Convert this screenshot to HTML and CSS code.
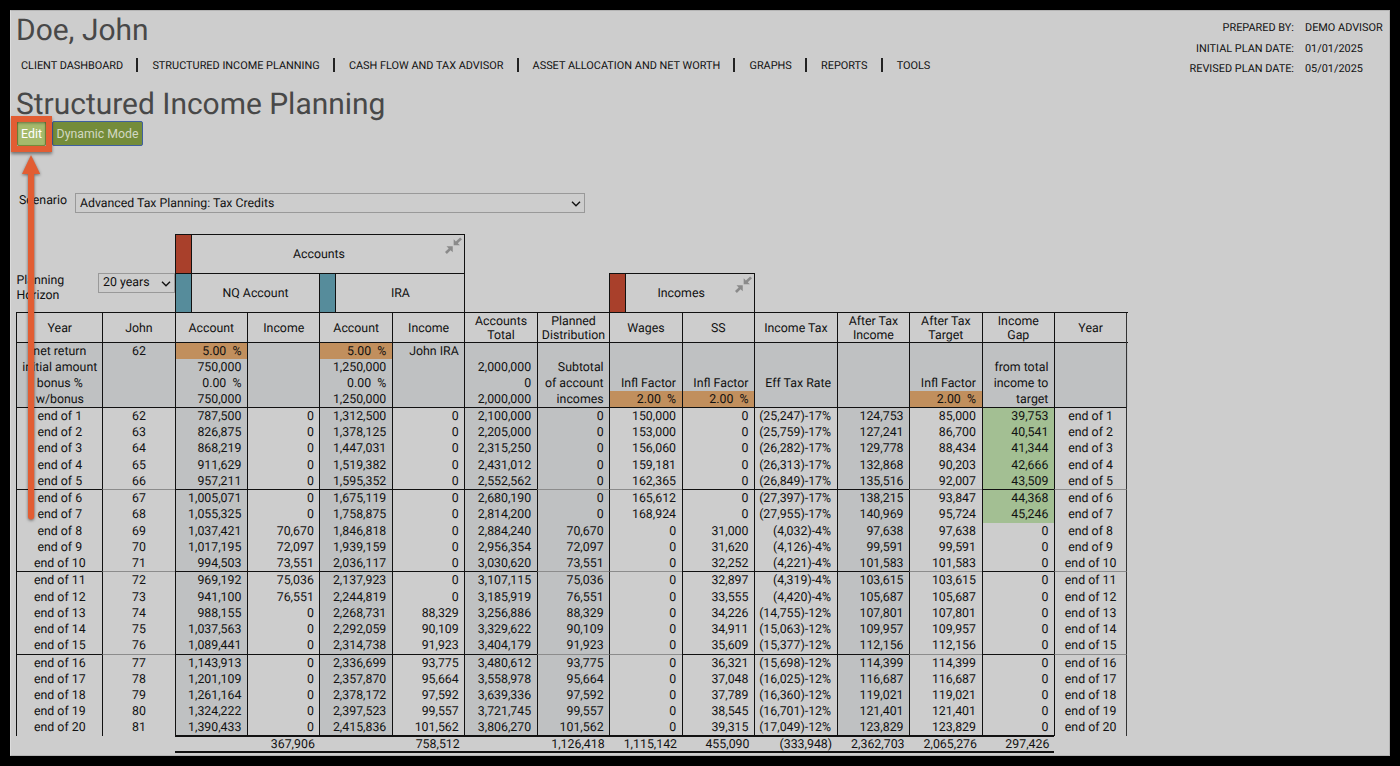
FILE: index.html
```html
<!DOCTYPE html>
<html lang="en">
<head>
  <meta charset="UTF-8">
  <title>Structured Income Planning</title>
  <link rel="stylesheet" href="styles.css">
</head>
<body>

  <div class="page">
    <div class="top">
      <div class="top-left">
        <h1 class="client-name">Doe, John</h1>
        <nav class="main-nav">
          <a>CLIENT DASHBOARD</a>
          <a>STRUCTURED INCOME PLANNING</a>
          <a>CASH FLOW AND TAX ADVISOR</a>
          <a>ASSET ALLOCATION AND NET WORTH</a>
          <a>GRAPHS</a>
          <a>REPORTS</a>
          <a>TOOLS</a>
        </nav>
      </div>
      <div class="plan-info">
        <span>PREPARED BY:</span><span>DEMO ADVISOR</span>
        <span>INITIAL PLAN DATE:</span><span>01/01/2025</span>
        <span>REVISED PLAN DATE:</span><span>05/01/2025</span>
      </div>
    </div>

    <h2 class="page-title">Structured Income Planning</h2>

    <div class="buttons">
      <button class="btn btn-edit">Edit</button>
      <button class="btn btn-dynamic">Dynamic Mode</button>
    </div>

    <div class="scenario">
      <label>Scenario</label>
      <div class="select select-scenario">
        <span>Advanced Tax Planning: Tax Credits</span>
        <svg class="chevron" viewBox="0 0 10 6"><path d="M1 0.8 L5 4.8 L9 0.8"/></svg>
      </div>
    </div>

    <div class="plan">
      <div class="groups">
        <div class="horizon">
          <label>Planning<br>Horizon</label>
          <div class="select select-years">
            <span>20 years</span>
            <svg class="chevron" viewBox="0 0 10 6"><path d="M1 0.8 L5 4.8 L9 0.8"/></svg>
          </div>
        </div>
        <div class="group accounts">
          <i class="tab red"></i><span>Accounts</span>
          <svg class="collapse" viewBox="0 0 18 18"><path d="M9.2 2.4V8.8h6.6l-2.3-2.3L18 2.4 16 0.4 11.5 4.7zM8.2 16.2V9.8H1.6l2.3 2.3L0 16 2 18 5.9 13.9z"/></svg>
        </div>
        <div class="group nq"><i class="tab teal"></i><span>NQ Account</span></div>
        <div class="group ira"><i class="tab teal"></i><span>IRA</span></div>
        <div class="group incomes">
          <i class="tab red"></i><span>Incomes</span>
          <svg class="collapse" viewBox="0 0 18 18"><path d="M9.2 2.4V8.8h6.6l-2.3-2.3L18 2.4 16 0.4 11.5 4.7zM8.2 16.2V9.8H1.6l2.3 2.3L0 16 2 18 5.9 13.9z"/></svg>
        </div>
      </div>

      <div class="row head">
        <div>Year</div>
        <div>John</div>
        <div>Account</div>
        <div>Income</div>
        <div>Account</div>
        <div>Income</div>
        <div>Accounts<br>Total</div>
        <div>Planned<br>Distribution</div>
        <div>Wages</div>
        <div>SS</div>
        <div>Income Tax</div>
        <div>After Tax<br>Income</div>
        <div>After Tax<br>Target</div>
        <div>Income<br>Gap</div>
        <div>Year</div>
      </div>

      <div class="row summary">
        <div><p>net return</p><p>initial amount</p><p>bonus %</p><p>w/bonus</p></div>
        <div><p>62</p></div>
        <div><p class="rate">5.00 &nbsp;%</p><p>750,000</p><p>0.00 &nbsp;%</p><p>750,000</p></div>
        <div></div>
        <div><p class="rate">5.00 &nbsp;%</p><p>1,250,000</p><p>0.00 &nbsp;%</p><p>1,250,000</p></div>
        <div><p>John IRA</p></div>
        <div><p></p><p>2,000,000</p><p>0</p><p>2,000,000</p></div>
        <div><p></p><p>Subtotal</p><p>of account</p><p>incomes</p></div>
        <div><p></p><p></p><p>Infl Factor</p><p class="rate">2.00 &nbsp;%</p></div>
        <div><p></p><p></p><p>Infl Factor</p><p class="rate">2.00 &nbsp;%</p></div>
        <div><p></p><p></p><p>Eff Tax Rate</p></div>
        <div></div>
        <div><p></p><p></p><p>Infl Factor</p><p class="rate">2.00 &nbsp;%</p></div>
        <div><p></p><p>from total</p><p>income to</p><p>target</p></div>
        <div></div>
      </div>

      <div id="years"></div>

      <div class="row totals">
        <div></div><div></div><div></div>
        <div>367,906</div><div></div><div>758,512</div><div></div>
        <div>1,126,418</div><div>1,115,142</div><div>455,090</div><div>(333,948)</div>
        <div>2,362,703</div><div>2,065,276</div><div>297,426</div><div></div>
      </div>
    </div>

    <!-- Edit button callout -->
    <div class="callout-box"></div>
    <svg class="callout-arrow" width="30" height="376" viewBox="0 0 30 376">
      <path d="M15 4 L24.2 23 H18.2 V365.5 Q18.2 368.5 15 368.5 Q12 368.5 12 365.5 V23 H6 Z"/>
    </svg>
  </div>

  <script>
    // account, income, account, income, total, distribution, wages, ss, tax, after tax, target, gap
    const data = [
      "787,500|0|1,312,500|0|2,100,000|0|150,000|0|(25,247)-17%|124,753|85,000|39,753",
      "826,875|0|1,378,125|0|2,205,000|0|153,000|0|(25,759)-17%|127,241|86,700|40,541",
      "868,219|0|1,447,031|0|2,315,250|0|156,060|0|(26,282)-17%|129,778|88,434|41,344",
      "911,629|0|1,519,382|0|2,431,012|0|159,181|0|(26,313)-17%|132,868|90,203|42,666",
      "957,211|0|1,595,352|0|2,552,562|0|162,365|0|(26,849)-17%|135,516|92,007|43,509",
      "1,005,071|0|1,675,119|0|2,680,190|0|165,612|0|(27,397)-17%|138,215|93,847|44,368",
      "1,055,325|0|1,758,875|0|2,814,200|0|168,924|0|(27,955)-17%|140,969|95,724|45,246",
      "1,037,421|70,670|1,846,818|0|2,884,240|70,670|0|31,000|(4,032)-4%|97,638|97,638|0",
      "1,017,195|72,097|1,939,159|0|2,956,354|72,097|0|31,620|(4,126)-4%|99,591|99,591|0",
      "994,503|73,551|2,036,117|0|3,030,620|73,551|0|32,252|(4,221)-4%|101,583|101,583|0",
      "969,192|75,036|2,137,923|0|3,107,115|75,036|0|32,897|(4,319)-4%|103,615|103,615|0",
      "941,100|76,551|2,244,819|0|3,185,919|76,551|0|33,555|(4,420)-4%|105,687|105,687|0",
      "988,155|0|2,268,731|88,329|3,256,886|88,329|0|34,226|(14,755)-12%|107,801|107,801|0",
      "1,037,563|0|2,292,059|90,109|3,329,622|90,109|0|34,911|(15,063)-12%|109,957|109,957|0",
      "1,089,441|0|2,314,738|91,923|3,404,179|91,923|0|35,609|(15,377)-12%|112,156|112,156|0",
      "1,143,913|0|2,336,699|93,775|3,480,612|93,775|0|36,321|(15,698)-12%|114,399|114,399|0",
      "1,201,109|0|2,357,870|95,664|3,558,978|95,664|0|37,048|(16,025)-12%|116,687|116,687|0",
      "1,261,164|0|2,378,172|97,592|3,639,336|97,592|0|37,789|(16,360)-12%|119,021|119,021|0",
      "1,324,222|0|2,397,523|99,557|3,721,745|99,557|0|38,545|(16,701)-12%|121,401|121,401|0",
      "1,390,433|0|2,415,836|101,562|3,806,270|101,562|0|39,315|(17,049)-12%|123,829|123,829|0"
    ];

    document.getElementById("years").innerHTML = data.map((line, i) => {
      const label = "end of " + (i + 1);
      const cells = [label, 62 + i, ...line.split("|"), label];
      const rule = i % 5 === 0 ? (i === 0 ? " first" : " rule") : "";
      return `<div class="row year${rule}">` + cells.map((c, n) =>
        `<div${n === 13 && c !== "0" ? ' class="gap"' : ""}>${c}</div>`).join("") + "</div>";
    }).join("");
  </script>

</body>
</html>
```
FILE: styles.css
```css
* {
box-sizing: border-box;
}

body {
margin: 0;
padding: 10px;
height: 766px;
overflow: hidden;
background-color: #000;
font-family: Roboto, sans-serif;
font-size: 12.35px;
text-rendering: geometricPrecision;
color: #111;
}

.page {
position: relative;
height: 746px;
padding-left: 6px;
background-color: #cdcdcd;
border: 1px solid #b4b4b4;
border-left-color: #dcdcdc;
}

h1, h2, p {
margin: 0;
font-weight: normal;
}

.top {
display: flex;
justify-content: space-between;
height: 74px;
}

.client-name, .page-title {
margin-left: -1px;
padding-top: 1px;
height: 36px;
font-size: 29.95px;
line-height: 37px;
color: #484848;
}

.main-nav {
display: flex;
align-items: center;
margin-top: 10px;
font-size: 10.9px;
line-height: 17px;
}

.main-nav a {
display: flex;
align-items: center;
white-space: nowrap;
}

.main-nav a:first-child {
padding-left: 4px;
}

.main-nav a + a::before {
content: "";
width: 2px;
height: 14px;
margin: 0 14px 2px 13.2px;
background-color: #222;
}

.plan-info {
display: grid;
grid-template-columns: auto 79px;
grid-auto-rows: 20.6px;
column-gap: 11px;
align-content: start;
margin: 6px 5px 0 0;
font-size: 10.9px;
line-height: 21px;
white-space: nowrap;
}

.plan-info span:nth-child(odd) {
text-align: right;
}

.buttons {
display: flex;
height: 25px;
}

.btn {
height: 25px;
padding: 0;
font-family: inherit;
font-size: 12.3px;
border: 1px solid #3f5fa0;
border-radius: 2px;
}

.btn-edit {
width: 29px;
margin-right: 6px;
background-color: #a5ba6c;
border-color: #7c9440;
color: #fff;
}

.btn-dynamic {
width: 91px;
background-color: #748c3a;
color: #d2d8c2;
}

.scenario {
display: flex;
margin-top: 47px;
height: 41px;
}

.scenario label {
width: 57.5px;
padding-left: 2px;
line-height: 16px;
}

.select {
display: flex;
align-items: center;
justify-content: space-between;
height: 20px;
padding: 1px 3px 0 4.5px;
border: 1px solid #999;
}

.select-scenario {
width: 510px;
font-size: 12.3px;
}

.chevron {
width: 10px;
height: 6px;
fill: none;
stroke: #111;
stroke-width: 1.4;
}

.plan {
width: 1112px;
margin-left: -0.6px;
}

.groups, .row {
display: grid;
grid-template-columns: 85.8px 72.4px repeat(8, 72.45px) 82.6px repeat(3, 72.45px) 73.2px;
}

.groups {
grid-template-rows: 39px 39px;
}

.horizon {
grid-area: 2 / 1 / 3 / 3;
display: flex;
justify-content: space-between;
align-items: flex-start;
line-height: 15px;
}

.horizon label {
padding-top: 1px;
}

.select-years {
width: 77px;
}

.group {
position: relative;
display: flex;
border: 1px solid #111;
border-bottom: 0;
margin-right: -1px;
}

.group span {
flex: 1;
align-self: center;
padding-top: 1px;
text-align: center;
}

.accounts { grid-area: 1 / 3 / 2 / 7; }
.nq { grid-area: 2 / 3 / 3 / 5; }
.ira { grid-area: 2 / 5 / 3 / 7; }
.incomes { grid-area: 2 / 9 / 3 / 11; }

.tab {
width: 16px;
border-right: 1px solid #111;
}

.red { background-color: #a9402b; }
.teal { background-color: #568c9b; }

.accounts span, .incomes span {
padding-right: 18px;
}

.collapse {
position: absolute;
top: 2px;
right: 2px;
width: 17px;
height: 17px;
fill: #8a8a8a;
}

.row > div {
border-left: 1px solid #111;
padding-right: 5.6px;
text-align: right;
}

.row > div:last-child {
border-right: 1px solid #333;
}

.row > div:nth-child(1), .row > div:nth-child(2), .row > div:last-child {
padding-right: 0;
text-align: center;
}

.head {
height: 30px;
border-top: 1px solid #111;
}

.row.head > div {
display: flex;
align-items: center;
justify-content: center;
padding: 1.5px 0 0;
line-height: 14.5px;
text-align: center;
}

.summary {
height: 65px;
border-top: 1px solid #111;
background-color: #bfc1c2;
}

.summary p {
height: 16.1px;
line-height: 18px;
white-space: nowrap;
}

.summary .rate {
margin-right: -5.6px;
padding-right: 5.6px;
background-color: #c18f5d;
}

.year > div {
height: 16.24px;
line-height: 18px;
white-space: nowrap;
}

.first > div, .rule > div {
height: 17.24px;
border-top: 1px solid #111;
}

.rule > div:nth-child(2), .rule > div:nth-child(8), .rule > div:nth-child(9),
.rule > div:nth-child(13), .rule > div:nth-child(15) {
border-top-color: #8c8c8c;
}

.year > div:nth-child(3), .year > div:nth-child(5), .year > div:nth-child(7),
.year > div:nth-child(8), .year > div:nth-child(12) {
background-color: #bfc1c2;
}

.year > .gap {
background-color: #a3bf93;
}

.totals {
margin-top: -0.6px;
}

.totals > div, .totals > div:last-child {
height: 18px;
border: 0;
border-top: 2px solid #111;
border-bottom: 2px solid #111;
padding-right: 4.6px;
line-height: 17px;
}

.totals > div:nth-child(1), .totals > div:nth-child(2), .totals > div:last-child {
border-color: transparent;
}

.callout-box {
position: absolute;
left: 0;
top: 105px;
width: 41px;
height: 36px;
border: 6px solid #e25d33;
box-shadow: 0 2px 3px rgba(0, 0, 0, 0.45), inset 0 1px 3px rgba(0, 0, 0, 0.4);
}

.callout-arrow {
position: absolute;
left: 5px;
top: 140px;
fill: #e25d33;
filter: drop-shadow(0 1px 1.5px rgba(0, 0, 0, 0.5));
}
```
